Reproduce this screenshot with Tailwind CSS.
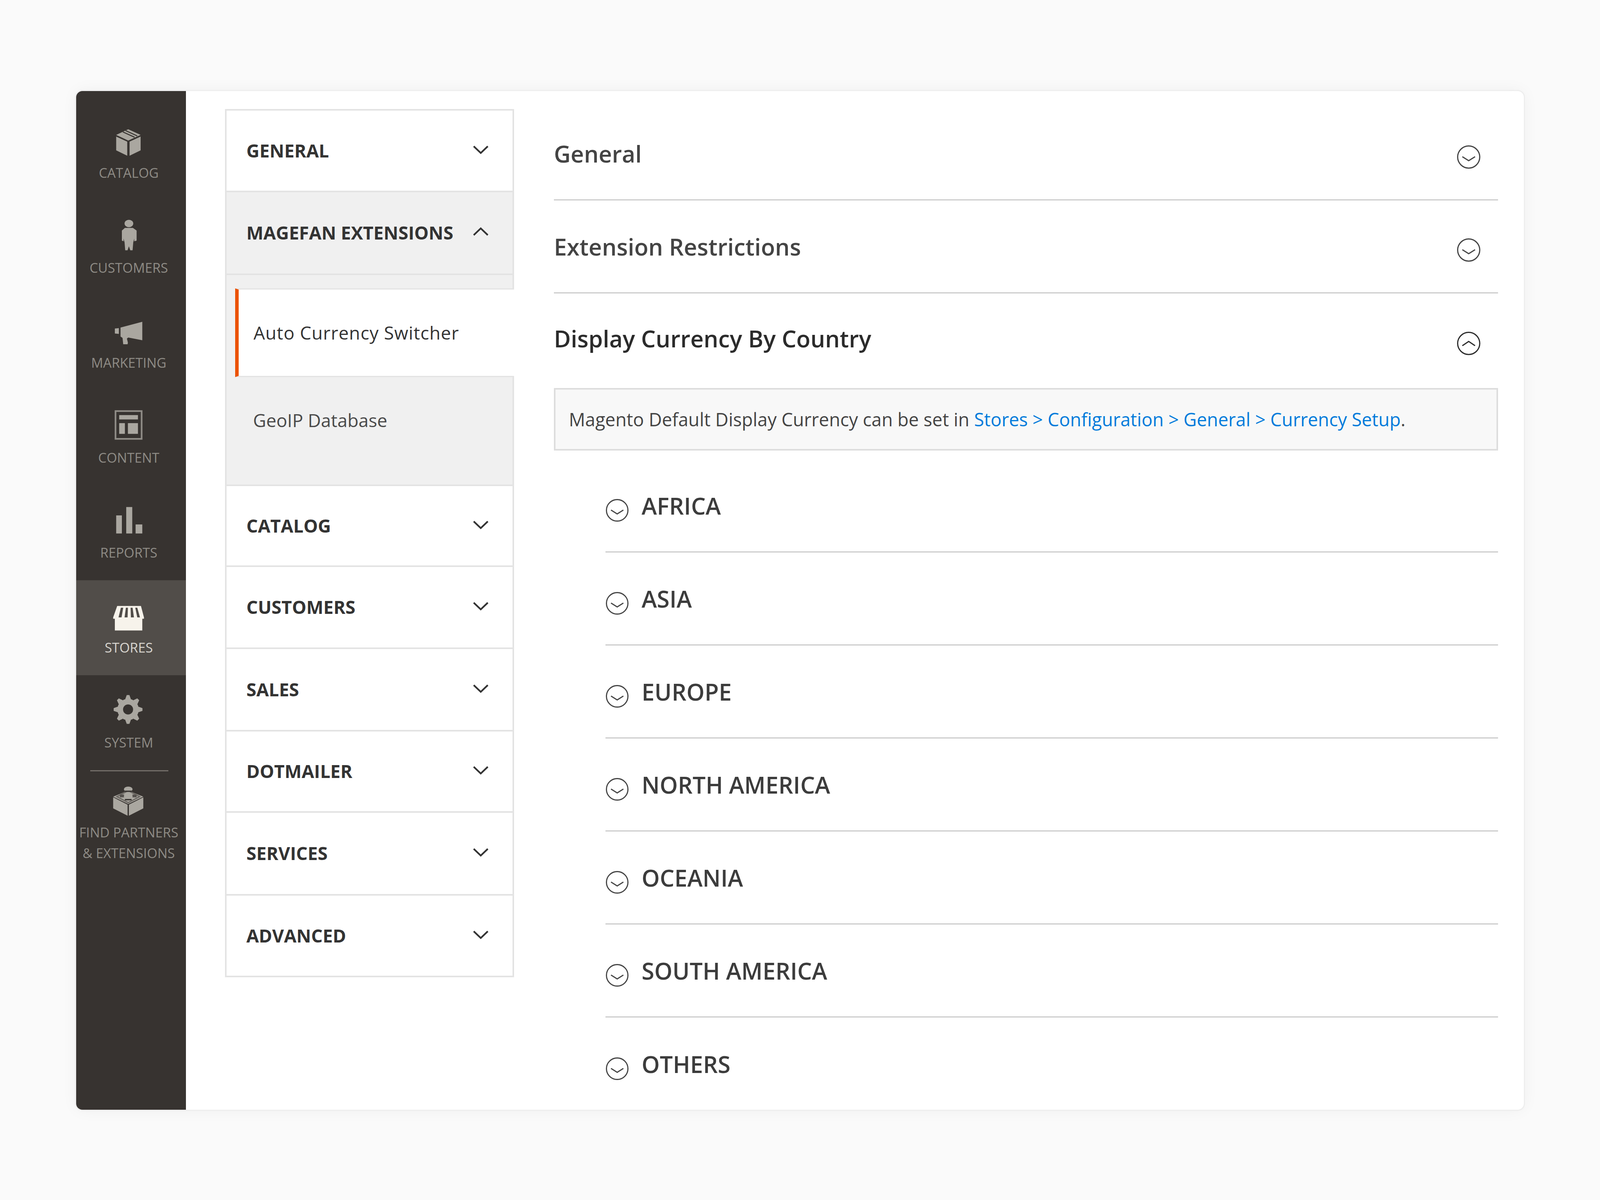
<!DOCTYPE html>
<html lang="en">
<head>
    <meta charset="UTF-8">
    <title>Magefan Auto Currency Switcher</title>
    <script src="https://cdn.jsdelivr.net/npm/@tailwindcss/browser@4"></script>
</head>
<body class="bg-[#fafafa] font-['Open_Sans',sans-serif] text-[#333333]">
<div class="w-full h-[3071px] pl-[4.772vw] pt-[233px]">
    <!-- card -->
    <div class="flex w-[90.46vw] h-[2607px] overflow-hidden rounded-[16px] bg-white ring-[3px] ring-[#eeeeee] shadow-[0_0_40px_rgba(0,0,0,0.05)]">

        <!-- admin sidebar -->
        <nav class="w-[6.844vw] shrink-0 bg-[#373330] pt-[37px] text-[0.837vw] leading-[52px] text-[#8e8b85] text-center">
            <a class="flex flex-col items-center h-[243px] pt-[45px] pr-[0.293vw]">
                <svg class="w-[2.302vw] h-[100px] overflow-visible mb-[1px]" viewBox="0 0 110 100" fill="#aaa7a0">
                    <path d="M54 10 91 27 54 44 18 27Z"/>
                    <path d="M18 32 51 47V89L18 73Z"/>
                    <path d="M58 47 91 32V73L58 89Z"/>
                    <path d="M38 18 73 34M46 14 81 30" stroke="#373330" stroke-width="3" fill="none"/>
                </svg>
                <span>CATALOG</span>
            </a>
            <a class="flex flex-col items-center h-[243px] pt-[45px] pr-[0.293vw]">
                <svg class="w-[2.302vw] h-[100px] overflow-visible mb-[1px]" viewBox="0 0 110 100" fill="#aaa7a0">
                    <ellipse cx="56" cy="8" rx="13" ry="11"/>
                    <path d="M44 21H68L79 29V59L72 61V53L69 64 67 88H60L56 76 52 88H45L43 64 40 53V61L35 59V29Z"/>
                </svg>
                <span>CUSTOMERS</span>
            </a>
            <a class="flex flex-col items-center h-[243px] pt-[45px] pr-[0.293vw]">
                <svg class="w-[2.302vw] h-[100px] overflow-visible mb-[1px]" viewBox="0 0 110 100" fill="#aaa7a0">
                    <path d="M14 38 26 37V54L14 53Z"/>
                    <path d="M31 35 96 18V73L54 65 50 68 53 80 52 85H39L37 66 31 62Z"/>
                </svg>
                <span>MARKETING</span>
            </a>
            <a class="flex flex-col items-center h-[243px] pt-[45px] pr-[0.293vw]">
                <svg class="w-[2.302vw] h-[100px] overflow-visible mb-[1px]" viewBox="0 0 110 100" fill="#aaa7a0">
                    <rect x="16" y="1" width="78" height="83" fill="none" stroke="#8f8c86" stroke-width="5"/>
                    <rect x="27" y="13" width="56" height="13"/>
                    <rect x="27" y="37" width="17" height="32"/>
                    <rect x="53" y="37" width="30" height="32"/>
                </svg>
                <span>CONTENT</span>
            </a>
            <a class="flex flex-col items-center h-[243px] pt-[45px] pr-[0.293vw]">
                <svg class="w-[2.302vw] h-[100px] overflow-visible mb-[1px]" viewBox="0 0 110 100" fill="#aaa7a0">
                    <rect x="18" y="29" width="17" height="54"/>
                    <rect x="48" y="4" width="18" height="79"/>
                    <rect x="76" y="56" width="20" height="27"/>
                </svg>
                <span>REPORTS</span>
            </a>
            <a class="flex flex-col items-center h-[243px] pt-[45px] pr-[0.293vw] bg-[#514d49] text-[#d8d5cf]">
                <svg class="w-[2.302vw] h-[100px] overflow-visible mb-[1px]" viewBox="0 0 110 100" fill="#f7f3eb">
                    <path d="M21 16H92L101 50V54H96V89H14V54H9V50Z"/>
                    <path d="M32 21 25 50H34L39 21ZM47 21 43 50H52L53 21ZM61 21 62 50H71L67 21ZM75 21 81 50H89L81 21Z" fill="#514d49"/>
                </svg>
                <span>STORES</span>
            </a>
            <a class="flex flex-col items-center h-[243px] pt-[45px] pr-[0.293vw]">
                <svg class="w-[2.302vw] h-[100px] overflow-visible mb-[1px]" viewBox="0 0 110 100" fill="#aaa7a0">
                    <g transform="translate(53.5 41.5)">
                        <circle r="32"/>
                        <polygon points="-8,-32 -4,-43 4,-43 8,-32 8,32 4,43 -4,43 -8,32"/>
                        <polygon transform="rotate(45)" points="-8,-32 -4,-43 4,-43 8,-32 8,32 4,43 -4,43 -8,32"/>
                        <polygon transform="rotate(90)" points="-8,-32 -4,-43 4,-43 8,-32 8,32 4,43 -4,43 -8,32"/>
                        <polygon transform="rotate(135)" points="-8,-32 -4,-43 4,-43 8,-32 8,32 4,43 -4,43 -8,32"/>
                        <circle r="15" fill="#373330"/>
                    </g>
                </svg>
                <span>SYSTEM</span>
            </a>
            <div class="h-[3px] w-[4.897vw] ml-[0.858vw] bg-[#736e69]"></div>
            <a class="flex flex-col items-center pt-[25px] pr-[0.293vw]">
                <svg class="w-[2.302vw] h-[100px] overflow-visible mb-[4px]" viewBox="0 0 110 100" fill="#aaa7a0">
                    <path d="M54 20 99 38 54 60 9 38Z"/>
                    <path d="M9 40 52 62V95L9 73Z"/>
                    <path d="M56 62 99 40V73L56 95Z"/>
                    <path d="M20 38 54 20 88 38 54 56Z" fill="none" stroke="#6d6964" stroke-width="4"/>
                    <ellipse cx="54" cy="16" rx="13" ry="8"/>
                    <path d="M44 22H64" stroke="#373330" stroke-width="4"/>
                    <path d="M29 36H42M66 36H79" stroke="#55514d" stroke-width="8"/>
                    <ellipse cx="54" cy="37" rx="13" ry="11"/>
                    <path d="M44 47H64" stroke="#373330" stroke-width="4"/>
                </svg>
                <span class="leading-[53px]">FIND PARTNERS<br>&amp; EXTENSIONS</span>
            </a>
        </nav>

        <!-- config tabs -->
        <aside class="w-[18.062vw] ml-[2.449vw] mt-[46px] shrink-0 self-start border-[4px] border-[#e3e3e3] bg-white text-[1.13vw] leading-[70px]">
            <div class="flex items-center justify-between h-[209px] pl-[1.235vw] pr-[1.5vw] border-b-[4px] border-[#e3e3e3] font-bold">
                <span>GENERAL</span>
                <svg class="w-[0.963vw] h-[28px] -mt-[6px]" viewBox="0 0 46 28" fill="none" stroke="#333333" stroke-width="5"><path d="M2 4 23 24 44 4"/></svg>
            </div>
            <div class="flex items-center justify-between h-[212px] pl-[1.235vw] pr-[1.5vw] border-b-[4px] border-[#e3e3e3] bg-[#f0f0f0] font-bold">
                <span>MAGEFAN EXTENSIONS</span>
                <svg class="w-[0.963vw] h-[28px] -mt-[6px]" viewBox="0 0 46 28" fill="none" stroke="#333333" stroke-width="5"><path d="M2 24 23 4 44 24"/></svg>
            </div>
            <div class="h-[540px] pt-[34px] bg-[#f0f0f0] border-b-[4px] border-[#e3e3e3]">
                <div class="flex items-center h-[227px] ml-[0.544vw] -mr-[4px] pl-[0.921vw] bg-white border-l-[9px] border-l-[#eb5202] border-y-[3px] border-y-[#e3e3e3] font-medium tracking-[0.02em]">Auto Currency Switcher</div>
                <div class="pl-[1.653vw] pt-[76px] text-[#4a4a4a]">GeoIP Database</div>
            </div>
            <div class="flex items-center justify-between h-[207px] pl-[1.235vw] pr-[1.5vw] border-b-[4px] border-[#e3e3e3] font-bold">
                <span>CATALOG</span>
                <svg class="w-[0.963vw] h-[28px] -mt-[6px]" viewBox="0 0 46 28" fill="none" stroke="#333333" stroke-width="5"><path d="M2 4 23 24 44 4"/></svg>
            </div>
            <div class="flex items-center justify-between h-[210px] pl-[1.235vw] pr-[1.5vw] border-b-[4px] border-[#e3e3e3] font-bold">
                <span>CUSTOMERS</span>
                <svg class="w-[0.963vw] h-[28px] -mt-[6px]" viewBox="0 0 46 28" fill="none" stroke="#333333" stroke-width="5"><path d="M2 4 23 24 44 4"/></svg>
            </div>
            <div class="flex items-center justify-between h-[211px] pl-[1.235vw] pr-[1.5vw] border-b-[4px] border-[#e3e3e3] font-bold">
                <span>SALES</span>
                <svg class="w-[0.963vw] h-[28px] -mt-[6px]" viewBox="0 0 46 28" fill="none" stroke="#333333" stroke-width="5"><path d="M2 4 23 24 44 4"/></svg>
            </div>
            <div class="flex items-center justify-between h-[208px] pl-[1.235vw] pr-[1.5vw] border-b-[4px] border-[#e3e3e3] font-bold">
                <span>DOTMAILER</span>
                <svg class="w-[0.963vw] h-[28px] -mt-[6px]" viewBox="0 0 46 28" fill="none" stroke="#333333" stroke-width="5"><path d="M2 4 23 24 44 4"/></svg>
            </div>
            <div class="flex items-center justify-between h-[212px] pl-[1.235vw] pr-[1.5vw] border-b-[4px] border-[#e3e3e3] font-bold">
                <span>SERVICES</span>
                <svg class="w-[0.963vw] h-[28px] -mt-[6px]" viewBox="0 0 46 28" fill="none" stroke="#333333" stroke-width="5"><path d="M2 4 23 24 44 4"/></svg>
            </div>
            <div class="flex items-center justify-between h-[205px] pl-[1.235vw] pr-[1.5vw] font-bold">
                <span>ADVANCED</span>
                <svg class="w-[0.963vw] h-[28px] -mt-[6px]" viewBox="0 0 46 28" fill="none" stroke="#333333" stroke-width="5"><path d="M2 4 23 24 44 4"/></svg>
            </div>
        </aside>

        <!-- settings -->
        <main class="w-[59vw] ml-[2.491vw] pt-[42px] shrink-0 text-[1.444vw] leading-[90px] font-semibold text-[#444444]">
            <div class="flex justify-between items-center h-[238px] pr-[1.067vw] border-b-[3px] border-[#cccccc]">
                <span>General</span>
                <svg class="w-[1.507vw] h-[1.507vw] mt-[18px]" viewBox="0 0 72 72" fill="none" stroke="#444444" stroke-width="3.5"><circle cx="36" cy="36" r="33"/><path d="M17 35 36 47 55 35"/></svg>
            </div>
            <div class="flex justify-between items-center h-[238px] pr-[1.067vw] border-b-[3px] border-[#cccccc]">
                <span>Extension Restrictions</span>
                <svg class="w-[1.507vw] h-[1.507vw] mt-[18px]" viewBox="0 0 72 72" fill="none" stroke="#444444" stroke-width="3.5"><circle cx="36" cy="36" r="33"/><path d="M17 35 36 47 55 35"/></svg>
            </div>
            <div class="flex justify-between items-center h-[238px] pr-[1.067vw] text-[#2b2b2b]">
                <span class="-mt-[8px]">Display Currency By Country</span>
                <svg class="w-[1.507vw] h-[1.507vw] mt-[18px]" viewBox="0 0 72 72" fill="none" stroke="#2b2b2b" stroke-width="3.5"><circle cx="36" cy="36" r="33"/><path d="M17 43 36 30 55 43"/></svg>
            </div>
            <div class="flex items-center h-[160px] mt-[4px] pl-[0.837vw] border-[4px] border-[#dddddd] bg-[#f8f8f8] text-[1.137vw] font-normal">
                <p>Magento Default Display Currency can be set in <a class="text-[#007bdb]">Stores &gt; Configuration &gt; General &gt; Currency Setup</a>.</p>
            </div>
            <ul class="ml-[3.223vw] mt-[23px] text-[#3c3c3c]">
                <li class="flex items-center h-[238px] border-b-[3px] border-[#cccccc]">
                    <svg class="w-[1.465vw] h-[1.465vw] mt-[24px] mr-[0.795vw]" viewBox="0 0 72 72" fill="none" stroke="#444444" stroke-width="3.5"><circle cx="36" cy="36" r="33"/><path d="M17 35 36 47 55 35"/></svg>
                    <span>AFRICA</span>
                </li>
                <li class="flex items-center h-[238px] border-b-[3px] border-[#cccccc]">
                    <svg class="w-[1.465vw] h-[1.465vw] mt-[24px] mr-[0.795vw]" viewBox="0 0 72 72" fill="none" stroke="#444444" stroke-width="3.5"><circle cx="36" cy="36" r="33"/><path d="M17 35 36 47 55 35"/></svg>
                    <span>ASIA</span>
                </li>
                <li class="flex items-center h-[238px] border-b-[3px] border-[#cccccc]">
                    <svg class="w-[1.465vw] h-[1.465vw] mt-[24px] mr-[0.795vw]" viewBox="0 0 72 72" fill="none" stroke="#444444" stroke-width="3.5"><circle cx="36" cy="36" r="33"/><path d="M17 35 36 47 55 35"/></svg>
                    <span>EUROPE</span>
                </li>
                <li class="flex items-center h-[238px] border-b-[3px] border-[#cccccc]">
                    <svg class="w-[1.465vw] h-[1.465vw] mt-[24px] mr-[0.795vw]" viewBox="0 0 72 72" fill="none" stroke="#444444" stroke-width="3.5"><circle cx="36" cy="36" r="33"/><path d="M17 35 36 47 55 35"/></svg>
                    <span>NORTH AMERICA</span>
                </li>
                <li class="flex items-center h-[238px] border-b-[3px] border-[#cccccc]">
                    <svg class="w-[1.465vw] h-[1.465vw] mt-[24px] mr-[0.795vw]" viewBox="0 0 72 72" fill="none" stroke="#444444" stroke-width="3.5"><circle cx="36" cy="36" r="33"/><path d="M17 35 36 47 55 35"/></svg>
                    <span>OCEANIA</span>
                </li>
                <li class="flex items-center h-[238px] border-b-[3px] border-[#cccccc]">
                    <svg class="w-[1.465vw] h-[1.465vw] mt-[24px] mr-[0.795vw]" viewBox="0 0 72 72" fill="none" stroke="#444444" stroke-width="3.5"><circle cx="36" cy="36" r="33"/><path d="M17 35 36 47 55 35"/></svg>
                    <span>SOUTH AMERICA</span>
                </li>
                <li class="flex items-center h-[238px]">
                    <svg class="w-[1.465vw] h-[1.465vw] mt-[24px] mr-[0.795vw]" viewBox="0 0 72 72" fill="none" stroke="#444444" stroke-width="3.5"><circle cx="36" cy="36" r="33"/><path d="M17 35 36 47 55 35"/></svg>
                    <span>OTHERS</span>
                </li>
            </ul>
        </main>
    </div>
</div>
</body>
</html>
